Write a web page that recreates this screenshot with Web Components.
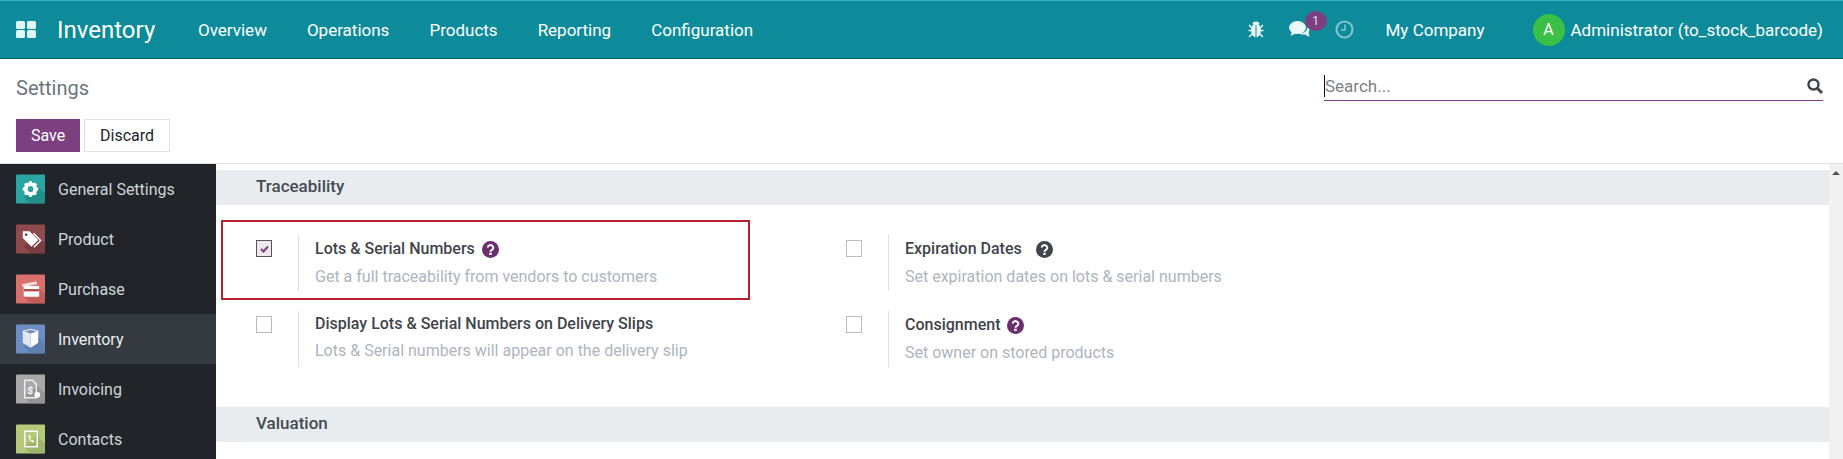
<!DOCTYPE html>
<html><head><meta charset="utf-8"><style>
html,body{margin:0;padding:0;height:459px;overflow:hidden;background:#fff;font-family:Roboto,"Liberation Sans",sans-serif}
body{display:flex;flex-direction:column}
</style></head><body>
<top-navbar></top-navbar>
<control-panel></control-panel>
<settings-body>
  <settings-sidebar slot="side">
    <side-item icon="gear">General Settings</side-item>
    <side-item icon="tag">Product</side-item>
    <side-item icon="card">Purchase</side-item>
    <side-item icon="box" active>Inventory</side-item>
    <side-item icon="doc">Invoicing</side-item>
    <side-item icon="phone">Contacts</side-item>
  </settings-sidebar>
  <section-head>Traceability</section-head>
  <settings-grid>
    <setting-box checked title-text="Lots &amp; Serial Numbers" help="purple" desc="Get a full traceability from vendors to customers"></setting-box>
    <setting-box title-text="Expiration Dates" help="dark" wide desc="Set expiration dates on lots &amp; serial numbers"></setting-box>
    <setting-box tight title-text="Display Lots &amp; Serial Numbers on Delivery Slips" desc="Lots &amp; Serial numbers will appear on the delivery slip"></setting-box>
    <setting-box title-text="Consignment" help="purple" desc="Set owner on stored products"></setting-box>
  </settings-grid>
  <section-head>Valuation</section-head>
</settings-body>
<script>
function def(name,html,init){customElements.define(name,class extends HTMLElement{
  constructor(){super();this.attachShadow({mode:'open'});}
  connectedCallback(){this.shadowRoot.innerHTML=typeof html==='function'?html(this):html;}
});}
def('top-navbar',`<style>
:host{display:flex;align-items:center;height:58px;box-sizing:content-box;background:#0e8b9a;border-top:1px solid #3fb0bb;border-bottom:1px solid #0a5b66;margin-bottom:-1px;color:#fff;font-size:17px;flex:none;padding:0 20px 0 16px;position:relative;z-index:1;height:57px}
svg{display:block;flex:none}
.brand{font-size:24px;margin-left:21px;width:141px}
nav{display:flex;gap:40px;flex:1}
.r{display:flex;align-items:center}
.chat{position:relative;margin-left:25px}
.badge{position:absolute;left:16px;top:-9px;width:22px;height:20px;border-radius:50%;background:#7c3f7f;font-size:12px;display:flex;align-items:center;justify-content:center;color:#e8d8ea}
.av{width:32px;height:32px;border-radius:50%;background:#3bbf45;display:flex;align-items:center;justify-content:center;font-size:16px;margin:0 6px 0 48px}
</style>
<svg width="20" height="17" viewBox="0 0 20 17" fill="#dff6f6"><rect width="9" height="8" rx="1.5"/><rect x="11" width="9" height="8" rx="1.5"/><rect y="9" width="9" height="8" rx="1.5"/><rect x="11" y="9" width="9" height="8" rx="1.5"/></svg>
<span class="brand">Inventory</span>
<nav><span>Overview</span><span>Operations</span><span>Products</span><span>Reporting</span><span>Configuration</span></nav>
<div class="r">
<svg width="16" height="17" viewBox="0 0 16 17" fill="none" stroke="#eaf8f8" stroke-width="1.5"><ellipse cx="8" cy="9.5" rx="4.2" ry="6" fill="#eaf8f8"/><path d="M4.5 3.5a3.5 3 0 0 1 7 0z" fill="#eaf8f8" stroke="none"/><path d="M1 4l3 3M15 4l-3 3M0.500 9.500h3.500M15.500 9.500H12M1 16l3-3M15 16l-3-3"/><path d="M8 4.500V16" stroke="#0e8b9a" stroke-width="1"/></svg>
<div class="chat"><svg width="21" height="19" viewBox="0 0 21 19" fill="#eaf8f8"><ellipse cx="8.500" cy="7.500" rx="8.500" ry="6.500"/><path d="M3 11l-1.500 5 6-3z"/><path d="M18.500 6.500c2 1.500 2.500 4 1.200 5.800l.8 4.700-4.500-2.500c-2 .3-4 0-5.500-1.300 4.500.3 8.500-2.500 8-6.700z"/></svg><span class="badge">1</span></div>
<svg style="margin-left:25px" width="19" height="19" viewBox="0 0 19 19" fill="none" stroke="#7fc3cb" stroke-width="2.200"><circle cx="9.500" cy="9.500" r="8"/><path d="M10 4.500v5.500H6" stroke-width="1.600"/></svg>
<span style="margin-left:32px">My Company</span>
<span class="av">A</span><span>Administrator (to_stock_barcode)</span>
</div>`);
def('control-panel',`<style>
:host{display:block;height:106px;box-sizing:border-box;border-bottom:1px solid #dfe2e5;padding:0 20px 0 16px;position:relative;flex:none}
.top{display:flex;justify-content:space-between;height:61px}
.t{font-size:20px;color:#6c757d;margin-top:15px;line-height:30px}
.s{width:499px;height:43px;box-sizing:border-box;border-bottom:1px solid #7c3f7f;display:flex;justify-content:space-between;align-items:center;margin-top:0;padding-top:14px;color:#7b7f83;font-size:17px}
.s span{border-left:1px solid #111;line-height:22px;height:22px}
.b{display:flex;gap:4px}
.btn{height:33px;box-sizing:border-box;display:flex;align-items:center;justify-content:center;font-size:16px}
.save{width:64px;background:#7c3f7f;color:#fff}
.dis{width:86px;border:1px solid #dee2e6;color:#212529}
</style>
<div class="top"><div class="t">Settings</div><div class="s"><span>Search...</span><svg width="16" height="16" viewBox="0 0 16 16" fill="none" stroke="#3f454b" stroke-width="2.400"><circle cx="6.500" cy="6.500" r="5"/><path d="M10 10l5 5" stroke-width="2.800"/></svg></div></div>
<div class="b"><div class="btn save">Save</div><div class="btn dis">Discard</div></div>`);
def('settings-body',`<style>
:host{display:flex;flex:1;min-height:0;overflow:hidden}
.m{flex:1;padding-top:6px;min-width:0;position:relative}
.bar{width:14px;background:#f1f1f1;flex:none;display:flex;justify-content:center;padding-top:7px;box-sizing:border-box}
.bar i{width:0;height:0;border:4px solid transparent;border-top:0;border-bottom:4px solid #505050}
.red{position:absolute;left:5px;top:56px;width:529px;height:80px;box-sizing:border-box;border:2px solid #b5212e}
</style><slot name="side"></slot><div class="m"><slot></slot><div class="red"></div></div><div class="bar"><i></i></div>`);
def('settings-sidebar',`<style>:host{display:block;width:216px;flex:none;background:#212529}</style><slot></slot>`);
const ICONS={
gear:['#2aa5a0','#1d7f7c','<circle cx="15" cy="15" r="5" fill="none" stroke="#fff" stroke-width="4"/><path d="M15 7v16M7 15h16M9.300 9.300l11.400 11.400M20.700 9.300L9.300 20.700" stroke="#fff" stroke-width="3" stroke-dasharray="3 10 3 0"/>'],
tag:['#8e4a4d','#6a3337','<path d="M7 7h7l9 9-7 7-9-9z" fill="#fff"/><circle cx="10.500" cy="10.500" r="1.500" fill="#8e4a4d"/><path d="M18 9l7.500 7.500-7 7" fill="none" stroke="#fff" stroke-width="1.500"/>'],
card:['#d9706b','#b0524e','<path d="M6 10l15-3 1 3-15 3z" fill="#f7dedd"/><rect x="8" y="12" width="16" height="11" rx="1" fill="#fff"/><rect x="8" y="15" width="16" height="2.500" fill="#b0524e"/>'],
box:['#6d8ec4','#5574a6','<path d="M15 10l8-3v12l-8 5z" fill="#fff"/><path d="M15 10L7 7v12l8 5z" fill="#dfe7f3"/><path d="M7 7l8-2 8 2-8 3z" fill="#6d8ec4" stroke="#fff"/>'],
doc:['#a9a9a9','#878787','<path d="M9 6h8l4 4v14H9z" fill="none" stroke="#eee" stroke-width="1.500"/><text x="12" y="20" font-family="Roboto" font-size="10" font-weight="700" fill="#fff">$</text><circle cx="22" cy="21" r="3" fill="#fff"/>'],
phone:['#b5c97a','#93a85c','<rect x="9" y="7" width="13" height="16" fill="none" stroke="#fff" stroke-width="1.500"/><path d="M13 11c0 4 2 7 5 8l1-2-2-1-1 1c-1-1-1.500-2-1.500-3l1-.5-1-2.500z" fill="#fff"/>']};
def('side-item',h=>{const[c,d,s]=ICONS[h.getAttribute('icon')];return `<style>
:host{display:flex;align-items:center;height:50px;padding-left:16px;box-sizing:border-box;font-size:16px;color:${h.hasAttribute('active')?'#eceef0':'#ced4da'};${h.hasAttribute('active')?'background:#343a40;':''}}
svg{margin-right:13px;display:block}</style>
<svg width="29" height="30" viewBox="0 0 30 30"><rect width="30" height="30" rx="1" fill="${c}"/><path d="M8 23L15 30H30V20L22 12z" fill="${d}" opacity=".6"/>${s}</svg><slot></slot>`});
def('section-head',`<style>:host{display:block;height:35px;background:#e9ecef;color:#454b52;font-size:17px;font-weight:500;line-height:33px;padding-left:40px}</style><slot></slot>`);
def('settings-grid',`<style>:host{display:grid;grid-template-columns:590px 1fr;grid-template-rows:76px 96px;padding-top:30px;padding-left:40px;height:202px;box-sizing:border-box}</style><slot></slot>`);
def('setting-box',h=>{const help=h.getAttribute('help');return `<style>
:host{display:flex;align-items:flex-start;}
.c{width:16px;height:17px;box-sizing:border-box;border:1px solid ${h.hasAttribute('checked')?'#555':'#b8bcc0'};margin-top:5px;display:flex;align-items:center;justify-content:center;${h.hasAttribute('checked')?'background:#ece8ee':''}}
.txt{border-left:1px solid #dee2e6;margin-left:26px;padding-left:16px;height:56px}
.ti{font-size:16px;font-weight:500;color:#3f454b;line-height:28px;display:flex;align-items:center;${h.hasAttribute('tight')?'margin-top:-1px':''}}
.d{font-size:16px;color:#adb5bd;line-height:28px;${h.hasAttribute('tight')?'margin-top:-1px':''}}
svg.h{margin-left:${h.hasAttribute('wide')?14:7}px}
</style>
<div class="c">${h.hasAttribute('checked')?'<svg width="9" height="8" viewBox="0 0 9 8" fill="none" stroke="#7c3f7f" stroke-width="2"><path d="M1 4l2.500 2.500L8 1.500"/></svg>':''}</div>
<div class="txt"><div class="ti"><span>${h.getAttribute('title-text').replace(/&/g,'&amp;')}</span>${help?`<svg class="h" width="17" height="17" viewBox="0 0 17 17"><circle cx="8.500" cy="8.500" r="8.500" fill="${help==='purple'?'#6b2f6f':'#3f454b'}"/><path d="M5.700 6.500a2.800 2.500 0 1 1 4.200 2.300c-1 .6-1.400 1-1.400 2" fill="none" stroke="#fff" stroke-width="2"/><rect x="7.300" y="11.700" width="2.400" height="2.300" fill="#fff"/></svg>`:''}</div>
<div class="d">${h.getAttribute('desc').replace(/&/g,'&amp;')}</div></div>`});
</script>
</body></html>
